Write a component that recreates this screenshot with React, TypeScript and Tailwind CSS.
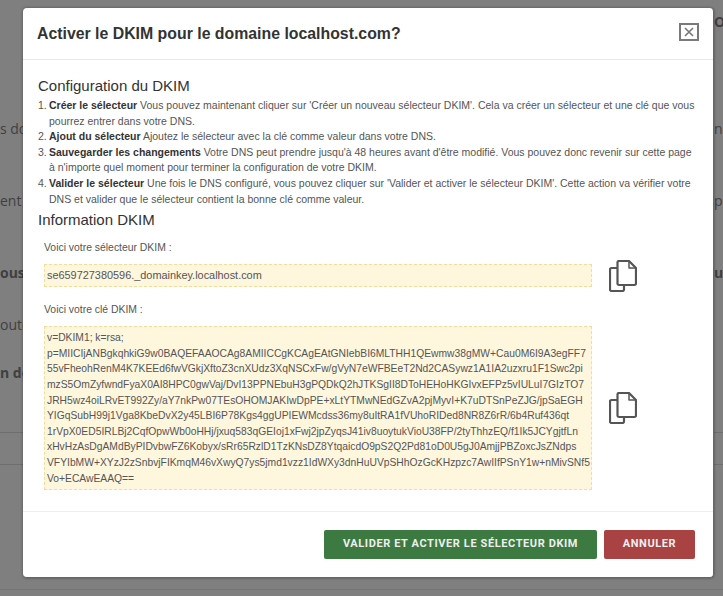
const keyLines = [
  'v=DKIM1; k=rsa;',
  'p=MIICIjANBgkqhkiG9w0BAQEFAAOCAg8AMIICCgKCAgEAtGNIebBI6MLTHH1QEwmw38gMW+Cau0M6I9A3egFF7',
  '55vFheohRenM4K7KEEd6fwVGkjXftoZ3cnXUdz3XqNSCxFw/gVyN7eWFBEeT2Nd2CASywz1A1IA2uzxru1F1Swc2pi',
  'mzS5OmZyfwndFyaX0AI8HPC0gwVaj/DvI13PPNEbuH3gPQDkQ2hJTKSgII8DToHEHoHKGIvxEFPz5vIULuI7GIzTO7',
  'JRH5wz4oiLRvET992Zy/aY7nkPw07TEsOHOMJAKIwDpPE+xLtYTMwNEdGZvA2pjMyvI+K7uDTSnPeZJG/jpSaEGH',
  'YIGqSubH99j1Vga8KbeDvX2y45LBI6P78Kgs4ggUPIEWMcdss36my8uItRA1fVUhoRIDed8NR8Z6rR/6b4Ruf436qt',
  '1rVpX0ED5IRLBj2CqfOpwWb0oHHj/jxuq583qGEIoj1xFwj2jpZyqsJ41iv8uoytukVioU38FP/2tyThhzEQ/f1Ik5JCYgjtfLn',
  'xHvHzAsDgAMdByPIDvbwFZ6Kobyx/sRr65RzlD1TzKNsDZ8YtqaicdO9pS2Q2Pd81oD0U5gJ0AmjjPBZoxcJsZNdps',
  'VFYIbMW+XYzJ2zSnbvjFIKmqM46vXwyQ7ys5jmd1vzz1IdWXy3dnHuUVpSHhOzGcKHzpzc7AwIIfPSnY1w+nMivSNf5',
  'Vo+ECAwEAAQ==',
];

const steps = [
  {
    title: 'Créer le sélecteur',
    text: " Vous pouvez maintenant cliquer sur 'Créer un nouveau sélecteur DKIM'. Cela va créer un sélecteur et une clé que vous pourrez entrer dans votre DNS.",
  },
  {
    title: 'Ajout du sélecteur',
    text: ' Ajoutez le sélecteur avec la clé comme valeur dans votre DNS.',
  },
  {
    title: 'Sauvegarder les changements',
    text: " Votre DNS peut prendre jusqu'à 48 heures avant d'être modifié. Vous pouvez donc revenir sur cette page à n'importe quel moment pour terminer la configuration de votre DKIM.",
  },
  {
    title: 'Valider le sélecteur',
    text: " Une fois le DNS configuré, vous pouvez cliquer sur 'Valider et activer le sélecteur DKIM'. Cette action va vérifier votre DNS et valider que le sélecteur contient la bonne clé comme valeur.",
  },
];

function CopyIcon() {
  return (
    <svg width="28" height="32" viewBox="0 0 28 32" fill="none" stroke="#555555" strokeWidth="2.2" strokeLinejoin="round" className="-my-[5px] shrink-0">
      <path d="M8.500 8H2.500a1.500 1.500 0 0 0-1.500 1.500V29.500A1.500 1.500 0 0 0 2.500 31h11a1.500 1.500 0 0 0 1.500-1.500V25" />
      <path d="M8.500 2.500A1.500 1.500 0 0 1 10 1H20L27 8V23.500A1.500 1.500 0 0 1 25.500 25H10A1.500 1.500 0 0 1 8.500 23.500Z" />
      <path d="M20 1V8H27" strokeWidth="1.500" />
    </svg>
  );
}

// Page content dimmed behind the modal
function Backdrop() {
  return (
    <div className="h-[596px] overflow-hidden bg-[#7f7f7f] font-['Open_Sans',sans-serif] text-[14px] leading-[20px] text-[#3f3f3f]">
      <div className="flex justify-end pt-[12px] font-bold">
        <span className="w-[9px] overflow-hidden whitespace-nowrap">ON</span>
      </div>
      <div className="mt-[87px] flex justify-between">
        <span>s do</span>
        <span className="w-[9px] overflow-hidden">n</span>
      </div>
      <div className="mt-[52px] flex justify-between">
        <span>ent T</span>
        <span className="w-[9px] overflow-hidden">pr</span>
      </div>
      <div className="mt-[52px] flex justify-between font-bold">
        <span>ous</span>
        <span className="w-[9px] overflow-hidden">ue</span>
      </div>
      <div className="mt-[32px]">outés</div>
      <div className="mt-[28px] font-bold">n do</div>
      <div className="mt-[49px] border-t border-[#6e6e6e]" />
      <div className="mt-[31px] border-t border-[#6e6e6e]" />
      <div className="mt-[124px] border-t border-[#747474]" />
    </div>
  );
}

export default function App() {
  return (
    <div className="relative h-[596px] w-[723px] overflow-hidden font-['Liberation_Sans',Arial,sans-serif]">
      <Backdrop />

      <div className="absolute left-[23px] top-[8px] w-[691px] rounded-[4px] border-r border-b border-[#666666] bg-white shadow-[0_0_3px_rgba(0,0,0,0.4)]">
        {/* Header */}
        <div className="flex h-[52px] items-center justify-between border-b border-[#e9e9e9] pl-[14px] pr-[14px]">
          <h4 className="text-[15.850px] font-bold text-[#333333]">Activer le DKIM pour le domaine localhost.com?</h4>
          <button className="-mt-[3px] flex h-[18px] w-[20px] items-center justify-center border-2 border-[#7a7a7a] bg-white">
            <svg width="10" height="10" viewBox="0 0 10 10" stroke="#777777" strokeWidth="1.600">
              <path d="M1 1l8 8M9 1l-8 8" />
            </svg>
          </button>
        </div>

        {/* Body */}
        <div className="border-b border-[#eeeeee] px-[15px] pb-[21px] pt-[16px] text-[#555555]">
          <h3 className="text-[15px] leading-[20px] text-[#333333]">Configuration du DKIM</h3>
          <ol className="mt-[2px] w-[658px] text-[10.500px] leading-[15.600px]">
            {steps.map((step, index) => (
              <li key={step.title} className="flex">
                <span className="w-[11px] shrink-0">{index + 1}.</span>
                <span>
                  <b className="text-[#333333]">{step.title}</b>
                  {step.text}
                </span>
              </li>
            ))}
          </ol>
          <h3 className="mt-[3px] text-[15px] leading-[20px] text-[#333333]">Information DKIM</h3>

          <div className="pl-[6px]">
            <p className="mt-[10px] text-[10.400px] leading-[16px]">Voici votre sélecteur DKIM :</p>
            <div className="mt-[8px] flex items-center">
              <div className="flex h-[23px] w-[548px] items-center border border-dashed border-[#f5dc9c] bg-[#fef6dd] pl-[2px] text-[10.900px] text-[#555555]">
                se659727380596._domainkey.localhost.com
              </div>
              <div className="ml-[17px]">
                <CopyIcon />
              </div>
            </div>

            <p className="mt-[15px] text-[10.400px] leading-[16px]">Voici votre clé DKIM :</p>
            <div className="mt-[8px] flex items-center">
              <div className="h-[164px] w-[548px] border border-dashed border-[#f5dc9c] bg-[#fef6dd] pl-[2px] pt-[3px] text-[10.300px] leading-[15.600px] text-[#555555]">
                {keyLines.map((line) => (
                  <div key={line} className="whitespace-nowrap">{line}</div>
                ))}
              </div>
              <div className="ml-[17px]">
                <CopyIcon />
              </div>
            </div>
          </div>
        </div>

        {/* Footer */}
        <div className="flex justify-end gap-[7px] pb-[18px] pr-[18px] pt-[18px] font-['Roboto',sans-serif] text-[11px] font-bold tracking-[0.6px] text-[#eeeeee]">
          <button className="h-[29px] w-[273px] rounded-[2px] bg-[#3d7a41]">VALIDER ET ACTIVER LE SÉLECTEUR DKIM</button>
          <button className="h-[29px] w-[91px] rounded-[2px] bg-[#a94343]">ANNULER</button>
        </div>
      </div>
    </div>
  );
}
